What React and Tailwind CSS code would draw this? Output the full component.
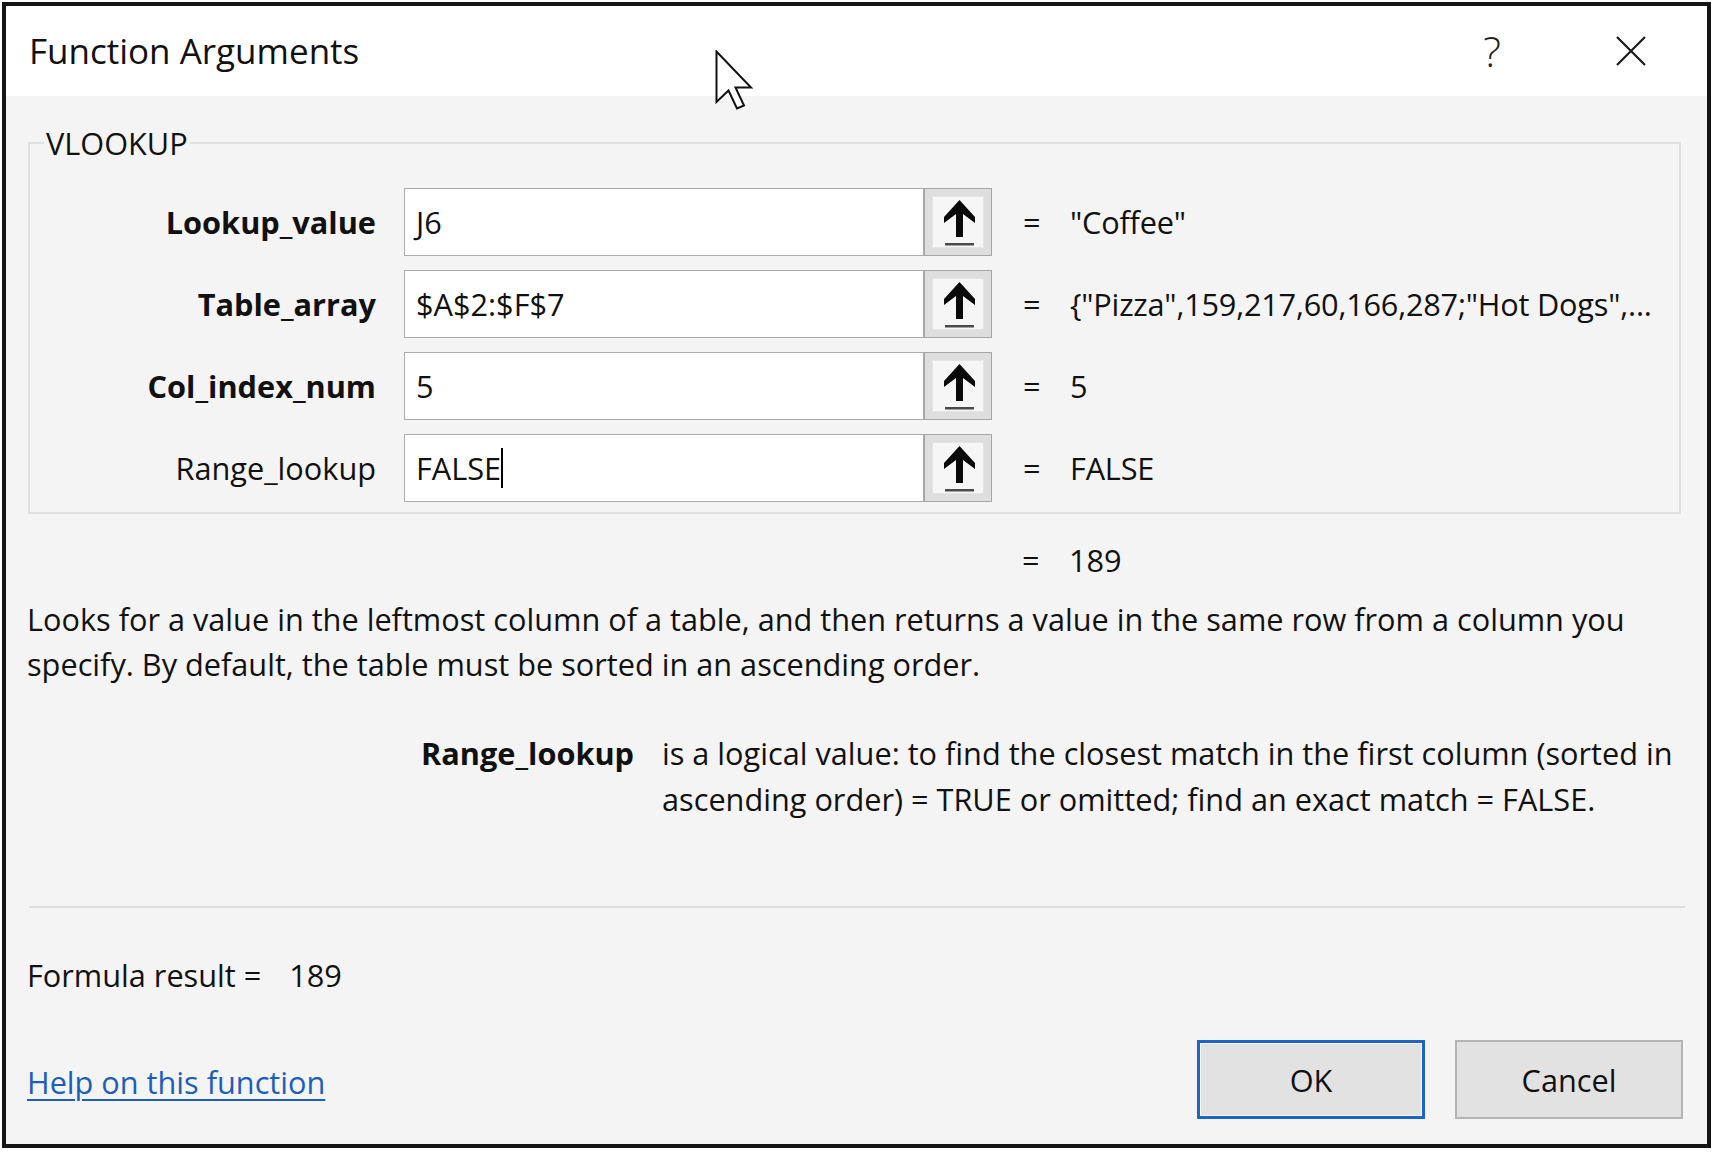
import React from 'react';

const args = [
  { name: 'Lookup_value', value: 'J6', result: '"Coffee"', bold: true },
  { name: 'Table_array', value: '$A$2:$F$7', result: '{"Pizza",159,217,60,166,287;"Hot Dogs",...', bold: true },
  { name: 'Col_index_num', value: '5', result: '5', bold: true },
  { name: 'Range_lookup', value: 'FALSE', result: 'FALSE', bold: false, caret: true },
];

const RefButton = () => (
  <div className="w-[68px] h-[68px] border border-[#a6a6a6] bg-[#dedede] flex items-center justify-center">
    <div className="w-[52px] h-[52px] bg-[#f6f6f6] border border-[#e4e4e4]">
      <svg width="52" height="52" viewBox="0 0 52 52">
        <polygon points="26.5,3 42,20 42,26 30,17 30,40 23,40 23,17 11,26 11,20" fill="#0a0a0a" />
        <rect x="12" y="46" width="29" height="2.5" fill="#4a4a4a" />
      </svg>
    </div>
  </div>
);

const ArgRow = ({ arg }) => (
  <div className="flex items-center h-[68px]">
    <div className={`w-[346px] text-right ${arg.bold ? 'font-bold' : ''}`}>{arg.name}</div>
    <div className="ml-[28px] w-[520px] h-[68px] bg-white border border-[#ababab] flex items-center pl-[11px]">
      <span>{arg.value}</span>
      {arg.caret && <span className="inline-block w-[2px] h-[40px] bg-black" />}
    </div>
    <RefButton />
    <span className="ml-[31px] w-[16px] text-center">=</span>
    <span className="ml-[31px] whitespace-nowrap tracking-[-0.2px]">{arg.result}</span>
  </div>
);

const Cursor = () => (
  <svg className="absolute left-[709px] top-[44px]" width="40" height="62" viewBox="0 0 40 62">
    <path
      d="M1.5 1.5 L1.5 52 L13.5 40.5 L22 58.5 L29 55.5 L20.5 37.5 L36 37.5 Z"
      fill="white"
      stroke="#111"
      strokeWidth="2"
      strokeLinejoin="miter"
    />
  </svg>
);

export default function App() {
  return (
    <div className="w-[1713px] h-[1153px] bg-white pt-[2px] pl-[2px] font-['Open_Sans',sans-serif] text-[#111] text-[30.7px] leading-[40px]">
      <div className="w-[1709px] h-[1146px] border-4 border-[#151515] flex flex-col bg-[#f4f4f4]">
        {/* title bar */}
        <div className="relative h-[90px] bg-white flex items-center pl-[23px] pr-[60px]">
          <span className="text-[35px]">Function Arguments</span>
          <span className="ml-auto text-[42px] font-light text-[#222]">?</span>
          <svg className="ml-[114px]" width="32" height="32" viewBox="0 0 32 32">
            <path d="M2 2 L30 30 M30 2 L2 30" stroke="#1a1a1a" strokeWidth="2.2" />
          </svg>
          <Cursor />
        </div>

        {/* body */}
        <div className="flex-1 flex flex-col pl-[21px] pr-[24px]">
          <fieldset className="mt-[27px] ml-[1px] mr-[2px] border-2 border-[#e0e0e0] pb-[10px]">
            <legend className="ml-[14px] px-[2px]">VLOOKUP</legend>
            <div className="mt-[25px] flex flex-col gap-[14px]">
              {args.map(arg => (
                <ArgRow key={arg.name} arg={arg} />
              ))}
            </div>
          </fieldset>

          <div className="mt-[26px] flex items-center pl-[995px]">
            <span className="w-[16px] text-center">=</span>
            <span className="ml-[31px]">189</span>
          </div>

          <p className="mt-[17px] leading-[45px]">
            Looks for a value in the leftmost column of a table, and then returns a value in the same row from a column you
            <br />
            specify. By default, the table must be sorted in an ascending order.
          </p>

          <div className="mt-[43px] flex leading-[46px]">
            <div className="w-[607px] text-right font-bold">Range_lookup</div>
            <div className="ml-[28px]">
              is a logical value: to find the closest match in the first column (sorted in
              <br />
              ascending order) = TRUE or omitted; find an exact match = FALSE.
            </div>
          </div>

          <div className="mt-[84px] ml-[2px] mr-[-2px] h-[2px] bg-[#dddddd]" />

          <div className="mt-[47px] flex items-center">
            <span>Formula result =</span>
            <span className="ml-[28px]">189</span>
          </div>

          <div className="mt-[45px] flex items-center">
            <a href="#" className="mt-[4px] text-[#1d5fb8] underline underline-offset-[5px] decoration-[2px]">
              Help on this function
            </a>
            <button className="ml-auto w-[228px] h-[79px] border-[3px] border-[#1e63c6] bg-[#e2e2e2] shadow-[inset_0_0_0_1px_#f8f8f8]">
              OK
            </button>
            <button className="ml-[30px] w-[228px] h-[79px] border-2 border-[#b4b4b4] bg-[#e2e2e2]">
              Cancel
            </button>
          </div>
        </div>
      </div>
    </div>
  );
}
